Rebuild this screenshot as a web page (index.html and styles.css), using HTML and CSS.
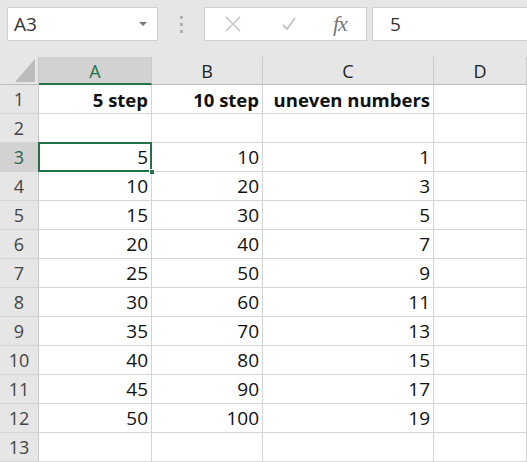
FILE: index.html
```html
<!DOCTYPE html>
<html lang="en">
<head>
    <meta charset="UTF-8">
    <title>Book1 - Excel</title>
    <link rel="stylesheet" href="styles.css">
</head>
<body>
    <!-- Formula bar -->
    <div class="formula-bar">
        <div class="name-box">
            <span>A3</span>
            <span class="caret"></span>
        </div>
        <div class="grip">
            <span></span><span></span><span></span>
        </div>
        <div class="fx-buttons">
            <svg class="btn-icon" width="18" height="18" viewBox="0 0 18 18">
                <path d="M2 2 L16 16 M16 2 L2 16" stroke="#c4c4c4" stroke-width="1.5" fill="none"/>
            </svg>
            <svg class="btn-icon" width="18" height="18" viewBox="0 0 18 18">
                <path d="M3 10 L7 14 L15 3" stroke="#c4c4c4" stroke-width="1.8" fill="none"/>
            </svg>
            <span class="fx">fx</span>
        </div>
        <div class="formula-input">5</div>
    </div>

    <!-- Sheet -->
    <div class="sheet">
        <div class="corner"><span class="corner-tri"></span></div>
        <div class="col-head active">A</div>
        <div class="col-head">B</div>
        <div class="col-head">C</div>
        <div class="col-head">D</div>

        <div class="row-head">1</div>
        <div class="cell bold">5 step</div>
        <div class="cell bold">10 step</div>
        <div class="cell bold">uneven numbers</div>
        <div class="cell"></div>

        <div class="row-head">2</div>
        <div class="cell"></div>
        <div class="cell"></div>
        <div class="cell"></div>
        <div class="cell"></div>

        <div class="row-head active">3</div>
        <div class="cell selected">5<span class="handle"></span></div>
        <div class="cell">10</div>
        <div class="cell">1</div>
        <div class="cell"></div>

        <div class="row-head">4</div>
        <div class="cell">10</div>
        <div class="cell">20</div>
        <div class="cell">3</div>
        <div class="cell"></div>

        <div class="row-head">5</div>
        <div class="cell">15</div>
        <div class="cell">30</div>
        <div class="cell">5</div>
        <div class="cell"></div>

        <div class="row-head">6</div>
        <div class="cell">20</div>
        <div class="cell">40</div>
        <div class="cell">7</div>
        <div class="cell"></div>

        <div class="row-head">7</div>
        <div class="cell">25</div>
        <div class="cell">50</div>
        <div class="cell">9</div>
        <div class="cell"></div>

        <div class="row-head">8</div>
        <div class="cell">30</div>
        <div class="cell">60</div>
        <div class="cell">11</div>
        <div class="cell"></div>

        <div class="row-head">9</div>
        <div class="cell">35</div>
        <div class="cell">70</div>
        <div class="cell">13</div>
        <div class="cell"></div>

        <div class="row-head">10</div>
        <div class="cell">40</div>
        <div class="cell">80</div>
        <div class="cell">15</div>
        <div class="cell"></div>

        <div class="row-head">11</div>
        <div class="cell">45</div>
        <div class="cell">90</div>
        <div class="cell">17</div>
        <div class="cell"></div>

        <div class="row-head">12</div>
        <div class="cell">50</div>
        <div class="cell">100</div>
        <div class="cell">19</div>
        <div class="cell"></div>

        <div class="row-head">13</div>
        <div class="cell"></div>
        <div class="cell"></div>
        <div class="cell"></div>
        <div class="cell"></div>
    </div>
</body>
</html>
```

FILE: styles.css
```css
* {
    margin: 0;
    padding: 0;
    box-sizing: border-box;
}

body {
    background: #e6e6e6;
    font-family: 'Open Sans', 'Noto Sans', sans-serif;
    color: #222;
    width: 527px;
    height: 462px;
    overflow: hidden;
}

/* ---- formula bar ---- */
.formula-bar {
    display: flex;
    align-items: center;
    height: 57px;
    padding: 0 0 9px 7px;
}

.name-box {
    width: 151px;
    height: 34px;
    background: #fff;
    border: 1px solid #d0d0d0;
    display: flex;
    align-items: center;
    justify-content: space-between;
    padding: 0 10px 0 6px;
    font-size: 19px;
    color: #333;
}

.caret {
    width: 0;
    height: 0;
    border-left: 4px solid transparent;
    border-right: 4px solid transparent;
    border-top: 4px solid #777;
}

.grip {
    width: 46px;
    display: flex;
    flex-direction: column;
    align-items: center;
    gap: 4px;
}

.grip span {
    width: 3px;
    height: 3px;
    background: #b0b0b0;
}

.fx-buttons {
    width: 163px;
    height: 34px;
    background: #fff;
    border: 1px solid #d0d0d0;
    display: flex;
    align-items: center;
    padding-left: 19px;
}

.btn-icon {
    margin-right: 38px;
}

.btn-icon + .btn-icon {
    margin-right: 35px;
}

.fx {
    font-family: 'Liberation Serif', serif;
    font-style: italic;
    font-size: 22px;
    color: #777;
    letter-spacing: -1px;
}

.formula-input {
    flex: 1;
    height: 34px;
    margin-left: 5px;
    background: #fff;
    border: 1px solid #d0d0d0;
    border-right: none;
    font-size: 19px;
    line-height: 32px;
    padding-left: 17px;
    color: #333;
}

/* ---- grid ---- */
.sheet {
    display: grid;
    grid-template-columns: 39px 113px 111px 171px 93px;
    grid-template-rows: 28px;
    grid-auto-rows: 29px;
    background: #fff;
}

.corner {
    background: #e6e6e6;
    border-right: 1px solid #c6c6c6;
    border-bottom: 1px solid #bdbdbd;
    position: relative;
}

.corner-tri {
    position: absolute;
    right: 3px;
    bottom: 2px;
    width: 0;
    height: 0;
    border-left: 20px solid transparent;
    border-bottom: 23px solid #bcbcbc;
}

.col-head {
    background: #e6e6e6;
    border-right: 1px solid #cacaca;
    border-bottom: 1px solid #bdbdbd;
    text-align: center;
    font-size: 18px;
    line-height: 28px;
    color: #222;
}

.col-head.active {
    background: #d2d2d2;
    color: #217346;
    border-bottom: 2px solid #217346;
}

.row-head {
    background: #e6e6e6;
    border-right: 1px solid #c6c6c6;
    border-bottom: 1px solid #d4d4d4;
    text-align: center;
    font-size: 18px;
    line-height: 29px;
    color: #444;
}

.row-head.active {
    background: #d2d2d2;
    color: #2f6447;
}

.cell {
    border-right: 1px solid #d4d4d4;
    border-bottom: 1px solid #d4d4d4;
    text-align: right;
    font-size: 19px;
    line-height: 29px;
    padding-right: 3px;
    color: #111;
}

.cell.bold {
    font-weight: 700;
    font-size: 18.5px;
}

.cell.selected {
    position: relative;
}

.cell.selected::before {
    content: "";
    position: absolute;
    left: -1px;
    top: -1px;
    right: -1px;
    bottom: -1px;
    border: 2px solid #217346;
}

.handle {
    position: absolute;
    right: -4px;
    bottom: -4px;
    width: 6px;
    height: 6px;
    background: #217346;
    border: 1px solid #fff;
    z-index: 2;
}
```
